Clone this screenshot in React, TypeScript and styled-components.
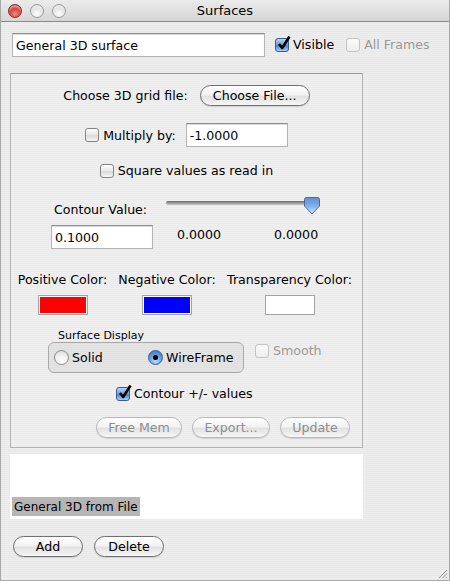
import React from "react";
import styled, { createGlobalStyle } from "styled-components";

const GlobalStyle = createGlobalStyle`
  html, body {
    margin: 0;
    padding: 0;
    background: #ececec;
  }
  body {
    font-family: "DejaVu Sans", "Liberation Sans", sans-serif;
    font-size: 12px;
    color: #000;
  }
`;

const Window = styled.div`
  position: relative;
  width: 450px;
  height: 581px;
  box-sizing: border-box;
  border-left: 1px solid #a8a8a8;
  border-right: 1px solid #a8a8a8;
  border-bottom: 1px solid #a8a8a8;
  background: repeating-linear-gradient(
    180deg,
    #ededed 0px,
    #ededed 1px,
    #e9e9e9 1px,
    #e9e9e9 2px
  );
  display: flex;
  flex-direction: column;
  overflow: hidden;
`;

const TitleBar = styled.div`
  height: 22px;
  box-sizing: border-box;
  border-bottom: 1px solid #8a8a8a;
  background: linear-gradient(180deg, #ebebeb 0%, #d6d6d6 100%);
  display: flex;
  align-items: center;
  position: relative;
  padding-left: 7px;
  gap: 8px;
`;

const Light = styled.span<{ $red?: boolean }>`
  width: 14px;
  height: 14px;
  border-radius: 50%;
  box-sizing: border-box;
  border: 1px solid ${(p) => (p.$red ? "#8a2a2a" : "#9a9a9a")};
  background: ${(p) =>
    p.$red
      ? "radial-gradient(circle at 50% 75%, #f28a84 0%, #d43a33 55%, #9e1f1a 100%)"
      : "radial-gradient(circle at 50% 75%, #ffffff 0%, #e2e2e2 55%, #bdbdbd 100%)"};
  box-shadow: inset 0 2px 2px rgba(255, 255, 255, 0.6);
`;

const Title = styled.div`
  position: absolute;
  left: 0;
  right: 0;
  top: 3px;
  text-align: center;
  font-size: 13px;
  pointer-events: none;
`;

const Body = styled.div`
  display: flex;
  flex-direction: column;
  padding: 10px 0 0 9px;
`;

const TopRow = styled.div`
  display: flex;
  align-items: center;
  height: 25px;
  padding-left: 2px;
`;

const TextField = styled.div<{ $w: number }>`
  width: ${(p) => p.$w}px;
  height: 24px;
  box-sizing: border-box;
  background: #fff;
  border: 1px solid #b4b4b4;
  border-top-color: #8c8c8c;
  box-shadow: inset 0 1px 1px rgba(0, 0, 0, 0.15);
  padding: 4px 3px 0;
  font-size: 12.6px;
  white-space: nowrap;
`;

const CheckLabel = styled.label<{ $disabled?: boolean; $ml?: number }>`
  display: flex;
  align-items: center;
  gap: 4px;
  margin-left: ${(p) => p.$ml ?? 0}px;
  font-size: 12.6px;
  color: ${(p) => (p.$disabled ? "#9a9a9a" : "#000")};
  white-space: nowrap;
`;

const Box = styled.span<{ $checked?: boolean; $disabled?: boolean }>`
  position: relative;
  width: 14px;
  height: 14px;
  box-sizing: border-box;
  border-radius: 3px;
  border: 1px solid
    ${(p) => (p.$checked ? "#3d5d8d" : p.$disabled ? "#c4c4c4" : "#838383")};
  background: ${(p) =>
    p.$checked
      ? "linear-gradient(180deg, #b9d4f3 0%, #6f9fd8 50%, #4b86d0 55%, #a6d0f7 100%)"
      : p.$disabled
      ? "linear-gradient(180deg, #fbfbfb 0%, #eeeeee 100%)"
      : "linear-gradient(180deg, #ffffff 0%, #e6e6e6 50%, #d9d9d9 55%, #f7f7f7 100%)"};
  flex-shrink: 0;
`;

const Tick = styled.svg`
  position: absolute;
  left: 1px;
  top: -4px;
`;

const Checkbox: React.FC<{ checked?: boolean; disabled?: boolean }> = ({
  checked,
  disabled,
}) => (
  <Box $checked={checked} $disabled={disabled}>
    {checked && (
      <Tick width="14" height="16" viewBox="0 0 14 16">
        <path
          d="M2 9 L5.2 13 L12.5 1.5"
          fill="none"
          stroke="#000"
          strokeWidth="2.6"
          strokeLinejoin="round"
        />
      </Tick>
    )}
  </Box>
);

const Panel = styled.div`
  margin-top: 16px;
  width: 353px;
  height: 375px;
  box-sizing: border-box;
  border: 1px solid #b2b2b2;
  border-top-color: #9a9a9a;
  background: rgba(255, 255, 255, 0.12);
  display: flex;
  flex-direction: column;
`;

const Row = styled.div<{ $mt: number; $pl?: number; $center?: boolean }>`
  display: flex;
  align-items: center;
  margin-top: ${(p) => p.$mt}px;
  padding-left: ${(p) => p.$pl ?? 0}px;
  justify-content: ${(p) => (p.$center ? "center" : "flex-start")};
  font-size: 12.6px;
  white-space: nowrap;
`;

const PillButton = styled.div<{ $w: number; $disabled?: boolean; $ml?: number }>`
  width: ${(p) => p.$w}px;
  height: 21px;
  box-sizing: border-box;
  margin-left: ${(p) => p.$ml ?? 0}px;
  border-radius: 11px;
  border: 1px solid ${(p) => (p.$disabled ? "#b8b8b8" : "#707070")};
  background: linear-gradient(
    180deg,
    #ffffff 0%,
    #f3f3f3 45%,
    #e2e2e2 55%,
    #f6f6f6 100%
  );
  box-shadow: 0 1px 1px rgba(0, 0, 0, 0.12);
  display: flex;
  align-items: center;
  justify-content: center;
  font-size: 12.6px;
  color: ${(p) => (p.$disabled ? "#8e8e8e" : "#000")};
`;

const ContourLabel = styled.span`
  width: 115px;
  margin-top: 7px;
  padding-left: 3px;
  box-sizing: border-box;
`;

const SliderWrap = styled.div`
  position: relative;
  width: 154px;
  height: 18px;
`;

const Track = styled.div`
  position: absolute;
  left: 0;
  right: 6px;
  top: 4px;
  height: 4px;
  border-radius: 2px;
  background: linear-gradient(180deg, #6a6a6a 0%, #9a9a9a 50%, #c8c8c8 100%);
`;

const Thumb = styled.svg`
  position: absolute;
  right: 0;
  top: 0;
`;

const ValueRow = styled.div`
  display: flex;
  align-items: flex-start;
  margin-top: 8px;
  padding-left: 40px;
  font-size: 12.6px;
`;

const Value = styled.span<{ $ml: number }>`
  margin-left: ${(p) => p.$ml}px;
  margin-top: 2px;
`;

const ColorGrid = styled.div`
  display: grid;
  grid-template-columns: 103px 106px 139px;
  margin-top: 23px;
  row-gap: 8px;
  font-size: 12.6px;
  justify-items: center;
  white-space: nowrap;
`;

const Swatch = styled.div<{ $color: string }>`
  width: 50px;
  height: 20px;
  box-sizing: border-box;
  border: 1px solid #a4a4a4;
  padding: 1px;
  background: #fff;
  &::after {
    content: "";
    display: block;
    width: 100%;
    height: 100%;
    background: ${(p) => p.$color};
  }
`;

const GroupTitle = styled.div`
  font-size: 11px;
  margin: 14px 0 0 47px;
`;

const GroupRow = styled.div`
  display: flex;
  align-items: flex-start;
  margin-top: 0;
  padding-left: 37px;
`;

const RadioGroup = styled.div`
  width: 196px;
  height: 31px;
  box-sizing: border-box;
  border: 1px solid #a9a9a9;
  border-radius: 6px;
  background: rgba(0, 0, 0, 0.045);
  display: flex;
  align-items: center;
  padding-left: 5px;
  font-size: 12.6px;
`;

const RadioItem = styled.div<{ $w: number }>`
  display: flex;
  align-items: center;
  gap: 3px;
  width: ${(p) => p.$w}px;
`;

const RadioDot = styled.span<{ $on?: boolean }>`
  width: 15px;
  height: 15px;
  box-sizing: border-box;
  border-radius: 50%;
  border: 1px solid ${(p) => (p.$on ? "#3d5d8d" : "#8a8a8a")};
  background: ${(p) =>
    p.$on
      ? "radial-gradient(circle at 50% 80%, #b6dcfb 0%, #5b93d8 60%, #3a6fb8 100%)"
      : "radial-gradient(circle at 50% 80%, #ffffff 0%, #ececec 60%, #cfcfcf 100%)"};
  display: flex;
  align-items: center;
  justify-content: center;
  &::after {
    content: "";
    display: ${(p) => (p.$on ? "block" : "none")};
    width: 5px;
    height: 5px;
    border-radius: 50%;
    background: #000;
  }
`;

const ListBox = styled.div`
  margin-top: 6px;
  width: 353px;
  height: 65px;
  box-sizing: border-box;
  background: #fff;
  display: flex;
  flex-direction: column;
  justify-content: flex-end;
  padding: 0 0 3px 2px;
`;

const ListItem = styled.div<{ $selected?: boolean }>`
  align-self: flex-start;
  height: 19px;
  padding: 0 2px;
  display: flex;
  align-items: center;
  font-size: 12px;
  background: ${(p) => (p.$selected ? "#b5b5b5" : "transparent")};
`;

const BottomRow = styled.div`
  display: flex;
  gap: 11px;
  margin-top: 17px;
  padding-left: 3px;
`;

const Grip = styled.svg`
  position: absolute;
  right: 1px;
  bottom: 1px;
`;

const App: React.FC = () => {
  return (
    <>
      <GlobalStyle />
      <Window>
        <TitleBar>
          <Light $red />
          <Light />
          <Light />
          <Title>Surfaces</Title>
        </TitleBar>
        <Body>
          <TopRow>
            <TextField $w={253}>General 3D surface</TextField>
            <CheckLabel $ml={10}>
              <Checkbox checked />
              Visible
            </CheckLabel>
            <CheckLabel $ml={12} $disabled>
              <Checkbox disabled />
              All Frames
            </CheckLabel>
          </TopRow>

          <Panel>
            <Row $mt={11} $center>
              Choose 3D grid file:
              <PillButton $w={110} $ml={12}>
                Choose File...
              </PillButton>
            </Row>
            <Row $mt={17} $center>
              <CheckLabel>
                <Checkbox />
                Multiply by:
              </CheckLabel>
              <TextField $w={102} style={{ marginLeft: 10 }}>
                -1.0000
              </TextField>
            </Row>
            <Row $mt={16} $center>
              <CheckLabel>
                <Checkbox />
                Square values as read in
              </CheckLabel>
            </Row>
            <Row $mt={17} $pl={40}>
              <ContourLabel>Contour Value:</ContourLabel>
              <SliderWrap>
                <Track />
                <Thumb width="16" height="18" viewBox="0 0 16 18">
                  <defs>
                    <linearGradient id="th" x1="0" y1="0" x2="0" y2="1">
                      <stop offset="0" stopColor="#5f8fcf" />
                      <stop offset="0.5" stopColor="#7fb0ec" />
                      <stop offset="1" stopColor="#cfe6fb" />
                    </linearGradient>
                  </defs>
                  <path
                    d="M2.5 0.5 H13.5 Q15.5 0.5 15.5 2.5 V9 L8 17 L0.5 9 V2.5 Q0.5 0.5 2.5 0.5 Z"
                    fill="url(#th)"
                    stroke="#4a6b98"
                  />
                </Thumb>
              </SliderWrap>
            </Row>
            <ValueRow>
              <TextField $w={102}>0.1000</TextField>
              <Value $ml={24}>0.0000</Value>
              <Value $ml={53}>0.0000</Value>
            </ValueRow>
            <ColorGrid>
              <span>Positive Color:</span>
              <span>Negative Color:</span>
              <span>Transparency Color:</span>
              <Swatch $color="#ff0000" />
              <Swatch $color="#0000ff" />
              <Swatch $color="#ffffff" />
            </ColorGrid>
            <GroupTitle>Surface Display</GroupTitle>
            <GroupRow>
              <RadioGroup>
                <RadioItem $w={94}>
                  <RadioDot />
                  Solid
                </RadioItem>
                <RadioItem $w={94}>
                  <RadioDot $on />
                  WireFrame
                </RadioItem>
              </RadioGroup>
              <CheckLabel $ml={11} $disabled style={{ marginTop: 1 }}>
                <Checkbox disabled />
                Smooth
              </CheckLabel>
            </GroupRow>
            <Row $mt={13} $pl={105}>
              <CheckLabel>
                <Checkbox checked />
                Contour +/- values
              </CheckLabel>
            </Row>
            <Row $mt={16} $pl={85}>
              <PillButton $w={86} $disabled>
                Free Mem
              </PillButton>
              <PillButton $w={78} $ml={10} $disabled>
                Export...
              </PillButton>
              <PillButton $w={70} $ml={10} $disabled>
                Update
              </PillButton>
            </Row>
          </Panel>

          <ListBox>
            <ListItem $selected>General 3D from File</ListItem>
          </ListBox>

          <BottomRow>
            <PillButton $w={70}>Add</PillButton>
            <PillButton $w={70}>Delete</PillButton>
          </BottomRow>
        </Body>
        <Grip width="12" height="12" viewBox="0 0 12 12">
          <path
            d="M11 3 L3 11 M11 6.5 L6.5 11 M11 10 L10 11"
            stroke="#8c8c8c"
            strokeWidth="1"
          />
        </Grip>
      </Window>
    </>
  );
};

export default App;
